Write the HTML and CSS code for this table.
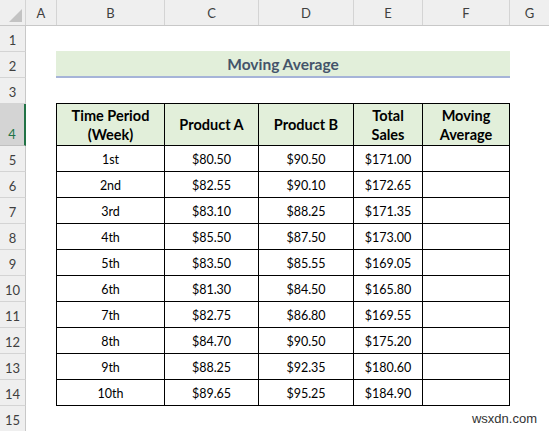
FILE: index.html
```html
<!DOCTYPE html>
<html>
<head>
<meta charset="utf-8">
<link rel="stylesheet" href="styles.css">
</head>
<body>
<div class="sheet">
  <div class="colhead">
    <div class="corner"><span class="tri"></span></div>
    <div class="ch w-a">A</div>
    <div class="ch w-b">B</div>
    <div class="ch w-c">C</div>
    <div class="ch w-d">D</div>
    <div class="ch w-e">E</div>
    <div class="ch w-f">F</div>
    <div class="ch w-g">G</div>
  </div>
  <div class="body">
    <div class="rowhead">
      <div class="rh">1</div>
      <div class="rh">2</div>
      <div class="rh">3</div>
      <div class="rh tall sel">4</div>
      <div class="rh">5</div>
      <div class="rh">6</div>
      <div class="rh">7</div>
      <div class="rh">8</div>
      <div class="rh">9</div>
      <div class="rh">10</div>
      <div class="rh">11</div>
      <div class="rh">12</div>
      <div class="rh">13</div>
      <div class="rh">14</div>
      <div class="rh">15</div>
    </div>
    <div class="cells">
      <div class="spacer"></div>
      <div class="title">Moving Average</div>
      <div class="spacer"></div>
      <table class="data">
        <colgroup>
          <col class="c-b"><col class="c-c"><col class="c-d"><col class="c-e"><col class="c-f">
        </colgroup>
        <thead>
          <tr>
            <th>Time Period<br>(Week)</th>
            <th>Product A</th>
            <th>Product B</th>
            <th>Total<br>Sales</th>
            <th>Moving<br>Average</th>
          </tr>
        </thead>
        <tbody>
          <tr><td>1st</td><td>$80.50</td><td>$90.50</td><td>$171.00</td><td></td></tr>
          <tr><td>2nd</td><td>$82.55</td><td>$90.10</td><td>$172.65</td><td></td></tr>
          <tr><td>3rd</td><td>$83.10</td><td>$88.25</td><td>$171.35</td><td></td></tr>
          <tr><td>4th</td><td>$85.50</td><td>$87.50</td><td>$173.00</td><td></td></tr>
          <tr><td>5th</td><td>$83.50</td><td>$85.55</td><td>$169.05</td><td></td></tr>
          <tr><td>6th</td><td>$81.30</td><td>$84.50</td><td>$165.80</td><td></td></tr>
          <tr><td>7th</td><td>$82.75</td><td>$86.80</td><td>$169.55</td><td></td></tr>
          <tr><td>8th</td><td>$84.70</td><td>$90.50</td><td>$175.20</td><td></td></tr>
          <tr><td>9th</td><td>$88.25</td><td>$92.35</td><td>$180.60</td><td></td></tr>
          <tr><td>10th</td><td>$89.65</td><td>$95.25</td><td>$184.90</td><td></td></tr>
        </tbody>
      </table>
    </div>
  </div>
  <div class="watermark">wsxdn.com</div>
</div>
</body>
</html>
```
FILE: styles.css
```css
html, body {
  margin: 0;
  padding: 0;
  background: #ffffff;
}
.sheet {
  position: relative;
  width: 549px;
  height: 431px;
  overflow: hidden;
  font-family: Lato, "Liberation Sans", sans-serif;
}
.colhead {
  display: flex;
  height: 26px;
  background: #efefef;
  border-bottom: 1px solid #c8c8c8;
  box-sizing: border-box;
}
.corner {
  position: relative;
  width: 26px;
  flex: none;
  border-right: 1px solid #d4d4d4;
  box-sizing: border-box;
}
.tri {
  position: absolute;
  right: 3px;
  bottom: 3px;
  width: 0;
  height: 0;
  border-left: 13px solid transparent;
  border-bottom: 13px solid #c3c3c3;
}
.ch {
  flex: none;
  box-sizing: border-box;
  border-right: 1px solid #d4d4d4;
  display: flex;
  align-items: center;
  justify-content: center;
  font-size: 13px;
  color: #3f3f3f;
}
.w-a { width: 31px; }
.w-b { width: 108px; }
.w-c { width: 94px; }
.w-d { width: 95px; }
.w-e { width: 69px; }
.w-f { width: 87px; }
.w-g { flex: 1; border-right: none; }

.body {
  display: flex;
}
.rowhead {
  width: 26px;
  flex: none;
  display: flex;
  flex-direction: column;
  background: #efefef;
}
.rh {
  height: 26px;
  box-sizing: border-box;
  border-right: 1px solid #c8c8c8;
  border-bottom: 1px solid #d4d4d4;
  display: flex;
  align-items: flex-end;
  justify-content: center;
  padding-bottom: 3px;
  font-size: 13px;
  color: #3f3f3f;
}
.rh.tall { height: 42px; }
.rh.sel {
  background: #d4d4d4;
  border-right: 2px solid #217346;
  color: #217346;
  border-bottom-color: #c0c0c0;
}
.cells {
  flex: 1;
  padding-left: 30px;
}
.spacer { height: 25px; }
.title {
  width: 454px;
  height: 27px;
  box-sizing: border-box;
  background: #e2efda;
  border-bottom: 2px solid #a6b4d8;
  display: flex;
  align-items: center;
  justify-content: center;
  font-weight: 700;
  font-size: 15.5px;
  color: #44546a;
}
table.data {
  border-collapse: separate;
  border-spacing: 0;
  table-layout: fixed;
  width: 454px;
  border-top: 1px solid #000;
  border-left: 1px solid #000;
}
.c-b { width: 108px; }
.c-c { width: 94px; }
.c-d { width: 95px; }
.c-e { width: 69px; }
.c-f { width: 87px; }
table.data th,
table.data td {
  box-sizing: border-box;
  border-right: 1px solid #000;
  border-bottom: 1px solid #000;
  padding: 0;
  text-align: center;
  color: #000;
}
table.data th {
  height: 42px;
  background: #e2efda;
  font-weight: 700;
  font-size: 14.5px;
  line-height: 19px;
}
table.data td {
  height: 26px;
  font-size: 12.5px;
  padding-top: 1px;
}
.watermark {
  position: absolute;
  right: 12px;
  bottom: 5px;
  font-family: "Liberation Sans", Arial, sans-serif;
  font-size: 13px;
  color: #333;
}
```
